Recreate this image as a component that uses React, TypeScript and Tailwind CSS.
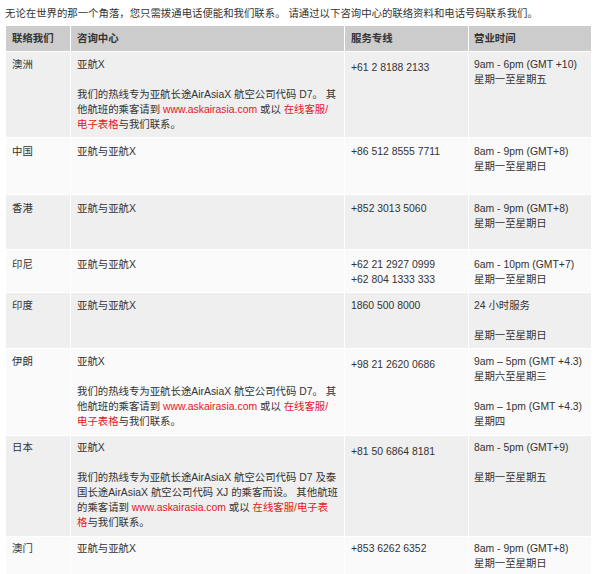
import React from "react";

const R = ({ children }: { children: React.ReactNode }) => (
  <span className="text-[#e8141c]">{children}</span>
);

type Row = {
  bg: string;
  h: string;
  pt: string;
  phonePt?: string;
  c1: React.ReactNode;
  c2: React.ReactNode;
  c3: React.ReactNode;
  c4: React.ReactNode;
};

const longText = (
  <>
    亚航X
    <br />
    <br />
    我们的热线专为亚航长途AirAsiaX 航空公司代码 D7。 其
    <br />
    他航班的乘客请到 <R>www.askairasia.com</R> 或以 <R>在线客服/</R>
    <br />
    <R>电子表格</R>与我们联系。
  </>
);

const rows: Row[] = [
  {
    bg: "bg-[#efefef]",
    h: "h-[85px]",
    pt: "pt-[5px]",
    phonePt: "pt-[8px]",
    c1: "澳洲",
    c2: longText,
    c3: "+61 2 8188 2133",
    c4: (
      <>
        9am - 6pm (GMT +10)
        <br />
        星期一至星期五
      </>
    ),
  },
  {
    bg: "bg-[#fafafa]",
    h: "h-[56px]",
    pt: "pt-[6px]",
    c1: "中国",
    c2: "亚航与亚航X",
    c3: "+86 512 8555 7711",
    c4: (
      <>
        8am - 9pm (GMT+8)
        <br />
        星期一至星期日
      </>
    ),
  },
  {
    bg: "bg-[#efefef]",
    h: "h-[54px]",
    pt: "pt-[6px]",
    c1: "香港",
    c2: "亚航与亚航X",
    c3: "+852 3013 5060",
    c4: (
      <>
        8am - 9pm (GMT+8)
        <br />
        星期一至星期日
      </>
    ),
  },
  {
    bg: "bg-[#fafafa]",
    h: "h-[42px]",
    pt: "pt-[7px]",
    c1: "印尼",
    c2: "亚航与亚航X",
    c3: (
      <>
        +62 21 2927 0999
        <br />
        +62 804 1333 333
      </>
    ),
    c4: (
      <>
        6am - 10pm (GMT+7)
        <br />
        星期一至星期日
      </>
    ),
  },
  {
    bg: "bg-[#efefef]",
    h: "h-[55px]",
    pt: "pt-[5px]",
    c1: "印度",
    c2: "亚航与亚航X",
    c3: "1860 500 8000",
    c4: (
      <>
        24 小时服务
        <br />
        <br />
        星期一至星期日
      </>
    ),
  },
  {
    bg: "bg-[#fafafa]",
    h: "h-[86px]",
    pt: "pt-[5px]",
    phonePt: "pt-[8px]",
    c1: "伊朗",
    c2: longText,
    c3: "+98 21 2620 0686",
    c4: (
      <>
        9am – 5pm (GMT +4.3)
        <br />
        星期六至星期三
        <br />
        <br />
        9am – 1pm (GMT +4.3)
        <br />
        星期四
      </>
    ),
  },
  {
    bg: "bg-[#efefef]",
    h: "h-[100px]",
    pt: "pt-[4px]",
    phonePt: "pt-[8px]",
    c1: "日本",
    c2: (
      <>
        亚航X
        <br />
        <br />
        我们的热线专为亚航长途AirAsiaX 航空公司代码 D7 及泰
        <br />
        国长途AirAsiaX 航空公司代码 XJ 的乘客而设。 其他航班
        <br />
        的乘客请到 <R>www.askairasia.com</R> 或以 <R>在线客服/电子表</R>
        <br />
        <R>格</R>与我们联系。
      </>
    ),
    c3: "+81 50 6864 8181",
    c4: (
      <>
        8am - 5pm (GMT+9)
        <br />
        <br />
        星期一至星期五
      </>
    ),
  },
  {
    bg: "bg-[#fafafa]",
    h: "h-[45px]",
    pt: "pt-[4px]",
    c1: "澳门",
    c2: "亚航与亚航X",
    c3: "+853 6262 6352",
    c4: (
      <>
        8am - 9pm (GMT+8)
        <br />
        星期一至星期日
      </>
    ),
  },
];

export default function App() {
  return (
    <div
      className="w-[606px] h-[574px] overflow-hidden bg-white text-[#333333] text-[10.4px] leading-[15px]"
      style={{ fontFamily: '"Liberation Sans", Arial, "Noto Sans CJK SC", sans-serif' }}
    >
      <div className="pl-[5px] pt-[6px] whitespace-nowrap">
        无论在世界的那一个角落，您只需拨通电话便能和我们联系。 请通过以下咨询中心的联络资料和电话号码联系我们。
      </div>
      <div className="ml-[6px] mt-[5px] w-[585px] flex flex-col gap-y-px bg-white">
        <div className="flex gap-x-px h-[25px] font-bold">
          <div className="w-[64px] bg-[#cccccc] pl-[6px] flex items-center">联络我们</div>
          <div className="w-[273px] bg-[#cccccc] pl-[6px] flex items-center">咨询中心</div>
          <div className="w-[123px] bg-[#cccccc] pl-[6px] flex items-center">服务专线</div>
          <div className="w-[122px] bg-[#cccccc] pl-[5px] flex items-center">营业时间</div>
        </div>
        {rows.map((r, i) => (
          <div key={i} className={`flex gap-x-px ${r.h}`}>
            <div className={`w-[64px] ${r.bg} pl-[6px] ${r.pt} whitespace-nowrap`}>{r.c1}</div>
            <div className={`w-[273px] ${r.bg} pl-[6px] ${r.pt} whitespace-nowrap`}>{r.c2}</div>
            <div className={`w-[123px] ${r.bg} pl-[6px] ${r.phonePt ?? r.pt} whitespace-nowrap`}>{r.c3}</div>
            <div className={`w-[122px] ${r.bg} pl-[5px] ${r.pt} whitespace-nowrap`}>{r.c4}</div>
          </div>
        ))}
      </div>
    </div>
  );
}
